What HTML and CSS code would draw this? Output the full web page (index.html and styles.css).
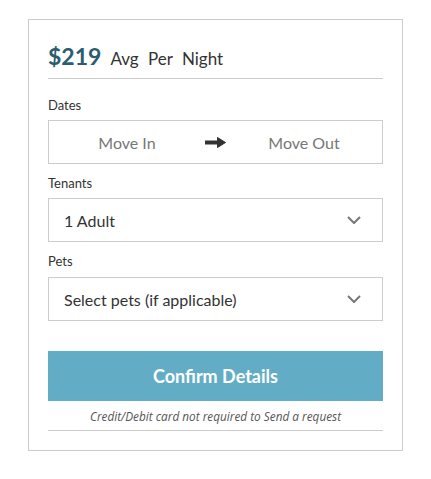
FILE: index.html
```html
<!DOCTYPE html>
<html>
  <head>
    <meta charset="utf-8" />
    <meta name="viewport" content="width=device-width, initial-scale=1" />
    <title>Booking</title>
    <link rel="stylesheet" href="styles.css">
  </head>
  <body>
    <section class="booking">
      <header class="price">
        <span class="price-amount">$219</span>
        <span class="price-unit">Avg Per Night</span>
      </header>

      <label class="field-label">Dates</label>
      <div class="dates">
        <span class="date">Move In</span>
        <svg class="arrow" width="21" height="11" viewBox="0 0 21 11">
          <rect x="0" y="3.5" width="14" height="4" fill="#333" />
          <path d="M12.5 0.5 L20.5 5.5 L12.5 10.5 Z" fill="#333" stroke="#333" stroke-linejoin="round" />
        </svg>
        <span class="date">Move Out</span>
      </div>

      <label class="field-label">Tenants</label>
      <div class="select">
        <span>1 Adult</span>
        <svg class="chevron" width="14" height="8" viewBox="0 0 14 8">
          <path d="M1 1 L7 7 L13 1" fill="none" stroke="#777" stroke-width="2" />
        </svg>
      </div>

      <label class="field-label field-label-pets">Pets</label>
      <div class="select">
        <span>Select pets (if applicable)</span>
        <svg class="chevron" width="14" height="8" viewBox="0 0 14 8">
          <path d="M1 1 L7 7 L13 1" fill="none" stroke="#777" stroke-width="2" />
        </svg>
      </div>

      <button class="confirm">Confirm Details</button>
      <p class="note">Credit/Debit card not required to Send a request</p>
    </section>
  </body>
</html>
```

FILE: styles.css
```css
* {
  box-sizing: border-box;
}

body {
  margin: 0;
  font-family: Lato, 'Open Sans', sans-serif;
  color: #333;
  background: #fff;
}

.booking {
  width: 375px;
  margin: 19px auto 0;
  padding: 21px 19px 19px;
  border: 1px solid #ccc;
}

.price {
  display: flex;
  align-items: baseline;
  gap: 9px;
  height: 38px;
  border-bottom: 1px solid #ccc;
  line-height: 30px;
}

.price-amount {
  font-size: 23px;
  font-weight: 700;
  color: #2b5d6f;
}

.price-unit {
  font-size: 17px;
  word-spacing: 5px;
}

.field-label {
  display: block;
  margin: 9px 0 5px;
  font-size: 13px;
  line-height: 20px;
}

.price + .field-label {
  margin-top: 16px;
}

.field-label-pets {
  margin-bottom: 6px;
}

.dates {
  display: grid;
  grid-template-columns: 1fr auto 1fr;
  align-items: center;
  height: 44px;
  border: 1px solid #ccc;
  font-size: 16px;
  color: #777;
}

.date {
  text-align: center;
}

.arrow {
  display: block;
}

.select {
  display: flex;
  align-items: center;
  justify-content: space-between;
  height: 44px;
  padding: 0 21px 0 15px;
  border: 1px solid #ccc;
  font-size: 16px;
}

.chevron {
  display: block;
}

.confirm {
  display: block;
  width: 100%;
  height: 50px;
  margin-top: 30px;
  border: 0;
  background: #62adc5;
  color: #fff;
  font: 700 18px Lato, sans-serif;
}

.note {
  margin: 0;
  padding: 6px 0 5px;
  border-bottom: 1px solid #ccc;
  text-align: center;
  font: italic 11.8px/18px 'Open Sans', sans-serif;
  color: #555;
}
```
